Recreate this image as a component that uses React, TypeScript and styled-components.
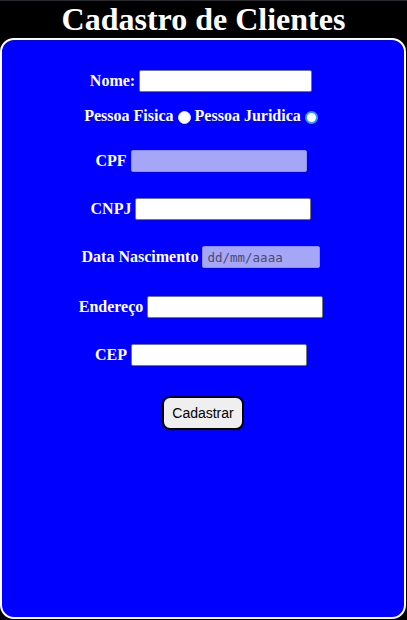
import React from "react";
import styled, { createGlobalStyle } from "styled-components";

const Global = createGlobalStyle`
  html, body { margin: 0; padding: 0; background: #000; }
  body { border-top: 1px solid #2b2b2f; font-family: "Liberation Serif", "Times New Roman", serif; overflow: hidden; }
`;

const Title = styled.h1`
  margin: 0;
  font-size: 32px;
  line-height: 37px;
  font-weight: bold;
  color: #fff;
  text-align: center;
`;

const Panel = styled.div`
  box-sizing: border-box;
  width: calc(100% - 1px);
  height: 581px;
  background: #0000ff;
  border: 2px solid #fff;
  border-radius: 14px;
  padding-top: 30px;
  display: flex;
  flex-direction: column;
  align-items: center;
`;

const Row = styled.div<{ $top: number }>`
  display: flex;
  align-items: baseline;
  justify-content: center;
  gap: 4px;
  margin-top: ${(p) => p.$top}px;
  padding-right: 4px;
`;

const Label = styled.label`
  font-family: "Liberation Serif", "Times New Roman", serif;
  font-size: 16px;
  line-height: 16px;
  font-weight: bold;
  color: #fff;
`;

const TextInput = styled.input<{ $w?: number }>`
  box-sizing: border-box;
  width: ${(p) => p.$w ?? 174}px;
  height: 22px;
  margin: 0;
  padding: 1px 2px;
  border: 1px solid #767676;
  border-radius: 2px;
  background: #fff;
  font-family: "Liberation Sans", Arial, sans-serif;
  font-size: 13.33px;
  &:disabled {
    background: #a6a6f6;
    border-color: #8f8fe6;
    color: #4a4a70;
  }
`;

const DateInput = styled(TextInput)`
  font-family: "DejaVu Sans Mono", "Liberation Mono", monospace;
  font-size: 12.5px;
  padding: 1px 4px;
`;

const Radio = styled.span<{ $ring?: boolean }>`
  display: inline-block;
  box-sizing: border-box;
  width: 13px;
  height: 13px;
  border-radius: 50%;
  background: #fff;
  border: ${(p) => (p.$ring ? "2px solid #3b9cff" : "1px solid #e8e8ff")};
  align-self: center;
  margin-top: 2px;
`;

const Button = styled.button`
  margin-top: 30px;
  padding: 7px 8px;
  border: 2px solid #000;
  border-radius: 8px;
  background: #efefef;
  font-family: "Liberation Sans", Arial, sans-serif;
  font-size: 14px;
  line-height: 16px;
  color: #000;
`;

export default function App() {
  return (
    <>
      <Global />
      <Title>Cadastro de Clientes</Title>
      <Panel>
        <Row $top={0}>
          <Label>Nome:</Label>
          <TextInput $w={173} />
        </Row>
        <Row $top={16}>
          <Label>Pessoa Fisica</Label>
          <Radio />
          <Label>Pessoa Juridica</Label>
          <Radio $ring />
        </Row>
        <Row $top={26}>
          <Label>CPF</Label>
          <TextInput $w={176} disabled />
        </Row>
        <Row $top={26}>
          <Label>CNPJ</Label>
          <TextInput $w={176} />
        </Row>
        <Row $top={26}>
          <Label>Data Nascimento</Label>
          <DateInput $w={118} disabled value="dd/mm/aaaa" readOnly />
        </Row>
        <Row $top={28}>
          <Label>Endereço</Label>
          <TextInput $w={176} />
        </Row>
        <Row $top={26}>
          <Label>CEP</Label>
          <TextInput $w={176} />
        </Row>
        <Button>Cadastrar</Button>
      </Panel>
    </>
  );
}
